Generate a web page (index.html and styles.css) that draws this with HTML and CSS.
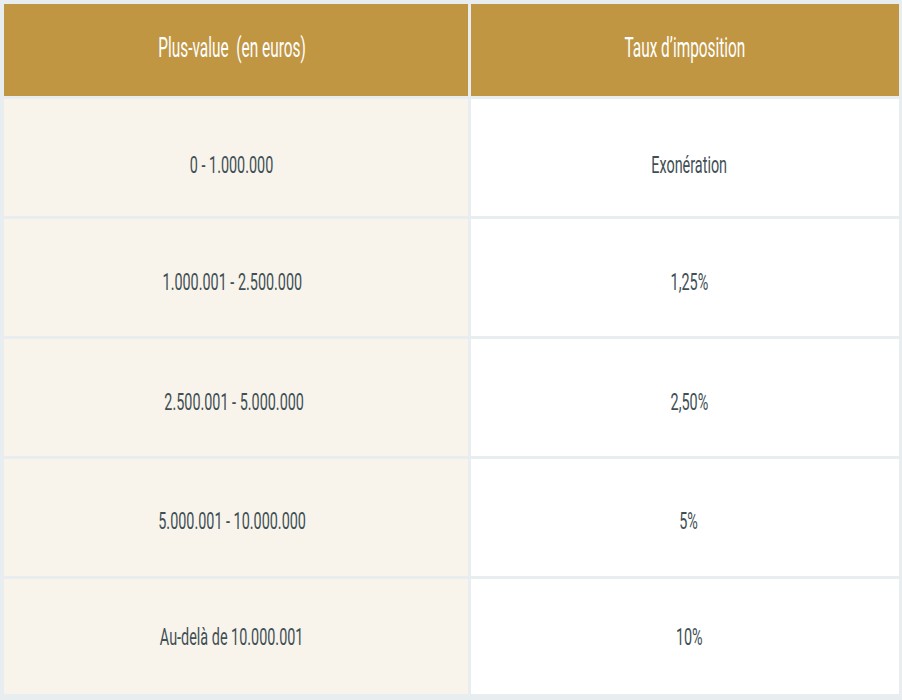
FILE: index.html
```html
<!DOCTYPE html>
<html lang="fr">
<head>
<meta charset="utf-8">
<link rel="stylesheet" href="styles.css">
</head>
<body>
<div class="wrap">
<table class="tax">
  <thead>
    <tr>
      <th class="col-a"><span class="txt">Plus-value&nbsp; (en euros)</span></th>
      <th class="col-b"><span class="txt">Taux d’imposition</span></th>
    </tr>
  </thead>
  <tbody>
    <tr class="r1">
      <td class="col-a"><span class="txt">0 - 1.000.000</span></td>
      <td class="col-b"><span class="txt">Exonération</span></td>
    </tr>
    <tr class="r2">
      <td class="col-a"><span class="txt">1.000.001 - 2.500.000</span></td>
      <td class="col-b"><span class="txt">1,25%</span></td>
    </tr>
    <tr class="r3">
      <td class="col-a"><span class="txt">&nbsp;2.500.001 - 5.000.000</span></td>
      <td class="col-b"><span class="txt">2,50%</span></td>
    </tr>
    <tr class="r4">
      <td class="col-a"><span class="txt">5.000.001 - 10.000.000</span></td>
      <td class="col-b"><span class="txt">5%</span></td>
    </tr>
    <tr class="r5">
      <td class="col-a"><span class="txt">Au-delà de 10.000.001</span></td>
      <td class="col-b"><span class="txt">10%</span></td>
    </tr>
  </tbody>
</table>
</div>
</body>
</html>
```
FILE: styles.css
```css
html, body {
  margin: 0;
  padding: 0;
  background: #ffffff;
}
.wrap {
  width: 902px;
  height: 700px;
  background: #e8eef0;
  padding: 1px 0 0 1px;
  box-sizing: border-box;
  overflow: hidden;
}
.tax {
  border-collapse: separate;
  border-spacing: 3px;
  table-layout: fixed;
  width: 901px;
}
.tax th, .tax td {
  padding: 0;
  text-align: center;
  vertical-align: middle;
  font-family: Roboto, "Liberation Sans", sans-serif;
  white-space: nowrap;
  box-sizing: border-box;
}
.tax .col-a { width: 464px; }
.tax th {
  background: #c09643;
  color: #ffffff;
  height: 92px;
  font-size: 28px;
  font-weight: 400;
  padding-bottom: 6px;
}
.tax th.col-a { padding-right: 8px; }
.tax td {
  height: 117px;
  font-size: 24px;
  font-weight: 400;
  color: #3f4f54;
  padding-top: 8px;
}
.tax td.col-a { background: #f8f4ec; padding-right: 8px; }
.tax td.col-b { background: #ffffff; padding-left: 8px; }
.tax tr.r1 td { padding-top: 14px; }
.tax tr.r4 td { padding-top: 6px; }
.tax tr.r5 td { height: 115px; padding-top: 0; }
.txt {
  display: inline-block;
  transform: scaleX(0.6);
  transform-origin: center;
}
.tax th .txt { transform: scaleX(0.55); }
```
